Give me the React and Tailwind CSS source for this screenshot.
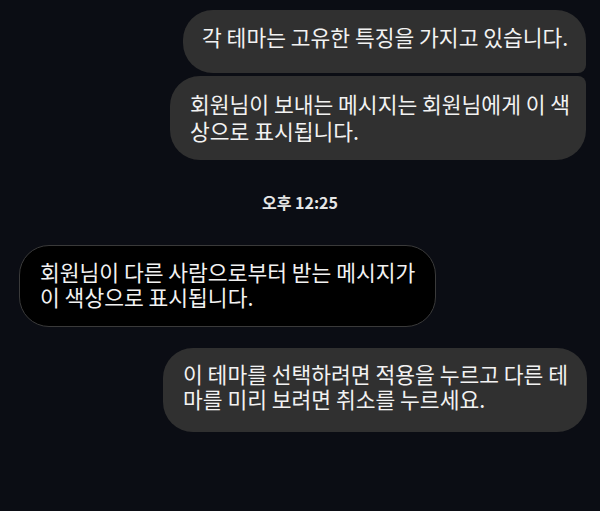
export default function App() {
  const font = { fontFamily: '"Noto Sans CJK KR", "Noto Sans", sans-serif' };
  return (
    <div
      className="w-[600px] h-[511px] bg-[#0b0d14] text-[#f2f2f2] flex flex-col overflow-hidden"
      style={font}
    >
      {/* sent group */}
      <div className="flex flex-col items-end gap-[3px] pt-[10px] pr-[14px]">
        <div className="w-[403px] h-[63px] bg-[#303030] rounded-[30px] rounded-br-[8px] px-[19px] pt-[13px] text-[21.5px] leading-[27px] whitespace-nowrap">
          각 테마는 고유한 특징을 가지고 있습니다.
        </div>
        <div className="w-[416px] bg-[#303030] rounded-[30px] rounded-tr-[8px] px-[20px] pt-[14px] pb-[16px] text-[21.5px] leading-[27px] whitespace-nowrap">
          <div>회원님이 보내는 메시지는 회원님에게 이 색</div>
          <div>상으로 표시됩니다.</div>
        </div>
      </div>

      {/* timestamp */}
      <div className="flex justify-center pt-[31px] pb-[32px]">
        <span className="text-[16px] leading-[22px] font-semibold text-[#e6e6e6]">오후 12:25</span>
      </div>

      {/* received */}
      <div className="flex pl-[19px]">
        <div className="w-[417px] bg-black border border-[#3a3a3a] rounded-[30px] px-[20px] pt-[13px] pb-[17px] text-[21.5px] leading-[25px] whitespace-nowrap">
          <div>회원님이 다른 사람으로부터 받는 메시지가</div>
          <div>이 색상으로 표시됩니다.</div>
        </div>
      </div>

      {/* sent */}
      <div className="flex justify-end pr-[13px] pt-[21px]">
        <div className="w-[424px] bg-[#303030] rounded-[30px] px-[20px] pt-[13px] pb-[21px] text-[21.5px] leading-[25px] whitespace-nowrap">
          <div>이 테마를 선택하려면 적용을 누르고 다른 테</div>
          <div>마를 미리 보려면 취소를 누르세요.</div>
        </div>
      </div>
    </div>
  );
}
